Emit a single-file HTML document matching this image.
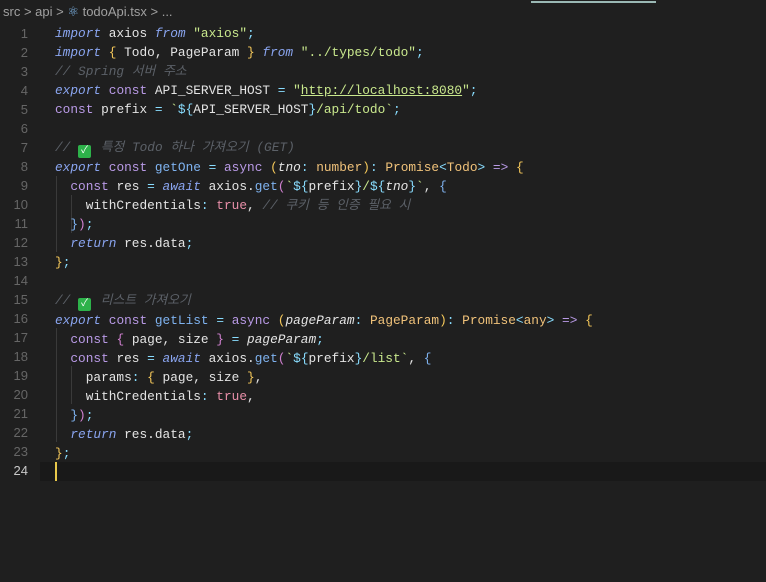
<!DOCTYPE html>
<html><head><meta charset="utf-8"><style>
body{margin:0;width:766px;height:582px;background:#1f1f1f;overflow:hidden;position:relative;font-family:"Liberation Mono","Noto Sans CJK KR",monospace;}
.bc{position:absolute;left:3px;top:4px;font:13px "Liberation Sans",sans-serif;color:#a0a0a0;}
.bar{position:absolute;left:531px;top:1px;width:125px;height:2px;background:#9ab8b4;}
.cur{position:absolute;left:40px;top:462px;width:726px;height:19px;background:#191919;}
.caret{position:absolute;left:55px;top:462px;width:2px;height:19px;background:#e8c84a;}
.ln{position:absolute;left:0;width:28px;text-align:right;font:13px "Liberation Sans",sans-serif;color:#666;line-height:19px;}
.code{position:absolute;left:55px;font-size:12.8px;line-height:19px;white-space:pre;color:#e4e4e4;}
.i{font-style:italic}
.k{color:#8aa5f0;font-style:italic}
.c{color:#b99ae6}
.f{color:#7fb3f0}
.s{color:#c9e88d}
.cm{color:#5c6168;font-style:italic}
.o{color:#89ddff}
.y{color:#f5c85a}
.t{color:#f0c27a}
.p{color:#e88fa8}
.m{color:#d080d0}
.g{display:inline-block;width:13px;height:13px;background:#2db24a;border-radius:2px;color:#fff;font-size:10px;line-height:13px;text-align:center;vertical-align:-2px;font-style:normal;margin-right:2px}
.ig{position:absolute;width:1px;background:#3a3a3a}
</style></head><body>
<div class="bc">src &gt; api &gt; <span style="color:#7fb6e8">⚛</span> todoApi.tsx &gt; ...</div>
<div class="bar"></div>
<div class="cur"></div>
<div class="ln" style="top:24px">1<br>2<br>3<br>4<br>5<br>6<br>7<br>8<br>9<br>10<br>11<br>12<br>13<br>14<br>15<br>16<br>17<br>18<br>19<br>20<br>21<br>22<br>23<br><span style="color:#c8c8c8">24</span></div>
<div class="ig" style="left:56px;top:176px;height:76px"></div>
<div class="ig" style="left:71px;top:195px;height:38px"></div>
<div class="ig" style="left:56px;top:328px;height:114px"></div>
<div class="ig" style="left:71px;top:366px;height:38px"></div>
<div class="code" style="top:24px"><span class="k">import</span> axios <span class="k">from</span> <span class="s">"axios"</span><span class="o">;</span>
<span class="k">import</span> <span class="y">{</span> Todo, PageParam <span class="y">}</span> <span class="k">from</span> <span class="s">"../types/todo"</span><span class="o">;</span>
<span class="cm">// Spring 서버 주소</span>
<span class="k">export</span> <span class="c">const</span> API_SERVER_HOST <span class="o">=</span> <span class="s">"<span style="text-decoration:underline">http://localhost:8080</span>"</span><span class="o">;</span>
<span class="c">const</span> prefix <span class="o">=</span> <span class="s">`</span><span class="o">${</span>API_SERVER_HOST<span class="o">}</span><span class="s">/api/todo`</span><span class="o">;</span>

<span class="cm">// <span class="g">✓</span> 특정 Todo 하나 가져오기 (GET)</span>
<span class="k">export</span> <span class="c">const</span> <span class="f">getOne</span> <span class="o">=</span> <span class="c">async</span> <span class="y">(</span><span class="i">tno</span><span class="o">:</span> <span class="t">number</span><span class="y">)</span><span class="o">:</span> <span class="t">Promise</span><span class="o">&lt;</span><span class="t">Todo</span><span class="o">&gt;</span> <span class="c">=&gt;</span> <span class="y">{</span>
  <span class="c">const</span> res <span class="o">=</span> <span class="k">await</span> axios.<span class="f">get</span><span class="m">(</span><span class="s">`</span><span class="o">${</span>prefix<span class="o">}</span><span class="s">/</span><span class="o">${</span><span class="i">tno</span><span class="o">}</span><span class="s">`</span>, <span class="f">{</span>
    withCredentials<span class="o">:</span> <span class="p">true</span>, <span class="cm">// 쿠키 등 인증 필요 시</span>
  <span class="f">}</span><span class="m">)</span><span class="o">;</span>
  <span class="k">return</span> res.data<span class="o">;</span>
<span class="y">}</span><span class="o">;</span>

<span class="cm">// <span class="g">✓</span> 리스트 가져오기</span>
<span class="k">export</span> <span class="c">const</span> <span class="f">getList</span> <span class="o">=</span> <span class="c">async</span> <span class="y">(</span><span class="i">pageParam</span><span class="o">:</span> <span class="t">PageParam</span><span class="y">)</span><span class="o">:</span> <span class="t">Promise</span><span class="o">&lt;</span><span class="t">any</span><span class="o">&gt;</span> <span class="c">=&gt;</span> <span class="y">{</span>
  <span class="c">const</span> <span class="m">{</span> page, size <span class="m">}</span> <span class="o">=</span> <span class="i">pageParam</span><span class="o">;</span>
  <span class="c">const</span> res <span class="o">=</span> <span class="k">await</span> axios.<span class="f">get</span><span class="m">(</span><span class="s">`</span><span class="o">${</span>prefix<span class="o">}</span><span class="s">/list`</span>, <span class="f">{</span>
    params<span class="o">:</span> <span class="y">{</span> page, size <span class="y">}</span>,
    withCredentials<span class="o">:</span> <span class="p">true</span>,
  <span class="f">}</span><span class="m">)</span><span class="o">;</span>
  <span class="k">return</span> res.data<span class="o">;</span>
<span class="y">}</span><span class="o">;</span>
</div>
<div class="caret"></div>
</body></html>
